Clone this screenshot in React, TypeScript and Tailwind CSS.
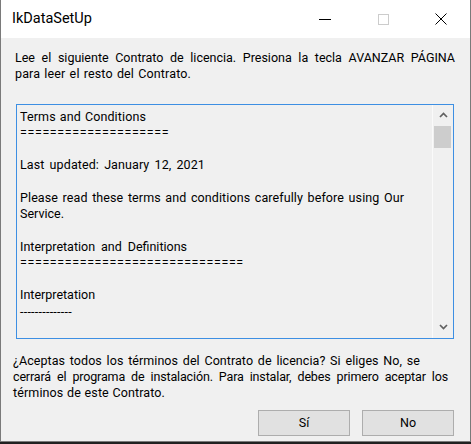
import React from 'react';

// one line of text, stretched to the width it has in the dialog
const Line: React.FC<{ w?: string; className?: string; children?: React.ReactNode }> = ({
  w = '',
  className = '',
  children,
}) => (
  <div className={`h-[16.27px] whitespace-nowrap ${w} ${w ? 'text-justify [text-align-last:justify]' : ''} ${className}`}>
    {children}
  </div>
);

const Chevron: React.FC<{ down?: boolean }> = ({ down }) => (
  <svg width="9" height="6" viewBox="0 0 9 6" className={down ? 'rotate-180' : ''}>
    <path d="M1 5 L4.5 1.5 L8 5" fill="none" stroke="#606060" strokeWidth="1.7" />
  </svg>
);

const App: React.FC = () => {
  return (
    <div className="w-[471px] h-[444px] bg-[#202020] text-black [font-family:'Segoe_UI',Roboto,sans-serif]">
      <div className="h-[442px] flex flex-col bg-[#f0f0f0] border-x border-b border-[#7a7a7a]">
        {/* title bar */}
        <div className="h-[38px] flex items-center bg-white shrink-0">
          <span className="pl-[11px] text-[14.5px] flex-1">IkDataSetUp</span>
          <div className="w-[58px] h-full flex items-center justify-center">
            <div className="w-[12px] h-px bg-black" />
          </div>
          <div className="w-[58px] h-full flex items-center justify-center">
            <div className="w-[11px] h-[11px] border border-[#cccccc]" />
          </div>
          <div className="w-[58px] h-full flex items-center justify-center">
            <svg width="12" height="12" viewBox="0 0 12 12">
              <path d="M0.5 0.5 L11.5 11.5 M11.5 0.5 L0.5 11.5" stroke="#000" strokeWidth="1" />
            </svg>
          </div>
        </div>

        {/* body */}
        <div className="flex flex-col flex-1 text-[12.5px] leading-[16.3px]">
          <div className="px-[14px] pt-[12px]">
            <Line w="w-[440px]">Lee el siguiente Contrato de licencia. Presiona la tecla AVANZAR PÁGINA</Line>
            <Line w="w-[176px]" className="tracking-[0.15px]">para leer el resto del Contrato.</Line>
          </div>

          <div className="mt-[21px] ml-[15px] mr-[16px] h-[235px] flex border border-[#3d8fe3] overflow-hidden">
            <div className="flex-1 pl-[3px] pt-[4px] overflow-hidden">
              <Line w="w-[126px]" className="tracking-[0.12px]">Terms and Conditions</Line>
              <Line className="tracking-[0.6px]">====================</Line>
              <Line />
              <Line w="w-[185px]" className="tracking-[0.1px]">Last updated: January 12, 2021</Line>
              <Line />
              <Line w="w-[384px]" className="tracking-[0.1px]">
                Please read these terms and conditions carefully before using Our
              </Line>
              <Line>Service.</Line>
              <Line />
              <Line w="w-[167px]">Interpretation and Definitions</Line>
              <Line className="tracking-[0.6px]">==============================</Line>
              <Line />
              <Line>Interpretation</Line>
              <Line className="tracking-[0.25px]">--------------</Line>
              <Line />
              <Line>The words of which the initial letter is capitalized have meanings defined</Line>
            </div>
            <div className="w-[21px] flex flex-col border-l border-[#fafafa]">
              <div className="h-[21px] flex items-center justify-center">
                <Chevron />
              </div>
              <div className="h-[22px] ml-px mr-[2px] bg-[#cdcdcd]" />
              <div className="flex-1" />
              <div className="h-[21px] flex items-center justify-center">
                <Chevron down />
              </div>
            </div>
          </div>

          <div className="px-[12px] pt-[14px]">
            <Line w="w-[407px]" className="tracking-[0.06px]">
              ¿Aceptas todos los términos del Contrato de licencia? Si eliges No, se
            </Line>
            <Line w="w-[435px]" className="tracking-[-0.15px]">
              cerrará el programa de instalación. Para instalar, debes primero aceptar los
            </Line>
            <Line w="w-[152px]" className="tracking-[0.12px]">términos de este Contrato.</Line>
          </div>

          <div className="flex justify-end gap-[12px] mt-auto mb-[5px] mr-[16px]">
            <button className="w-[92px] h-[26px] bg-[#e1e1e1] border border-[#adadad]">Sí</button>
            <button className="w-[92px] h-[26px] bg-[#e1e1e1] border border-[#adadad]">No</button>
          </div>
        </div>
      </div>
    </div>
  );
};

export default App;
